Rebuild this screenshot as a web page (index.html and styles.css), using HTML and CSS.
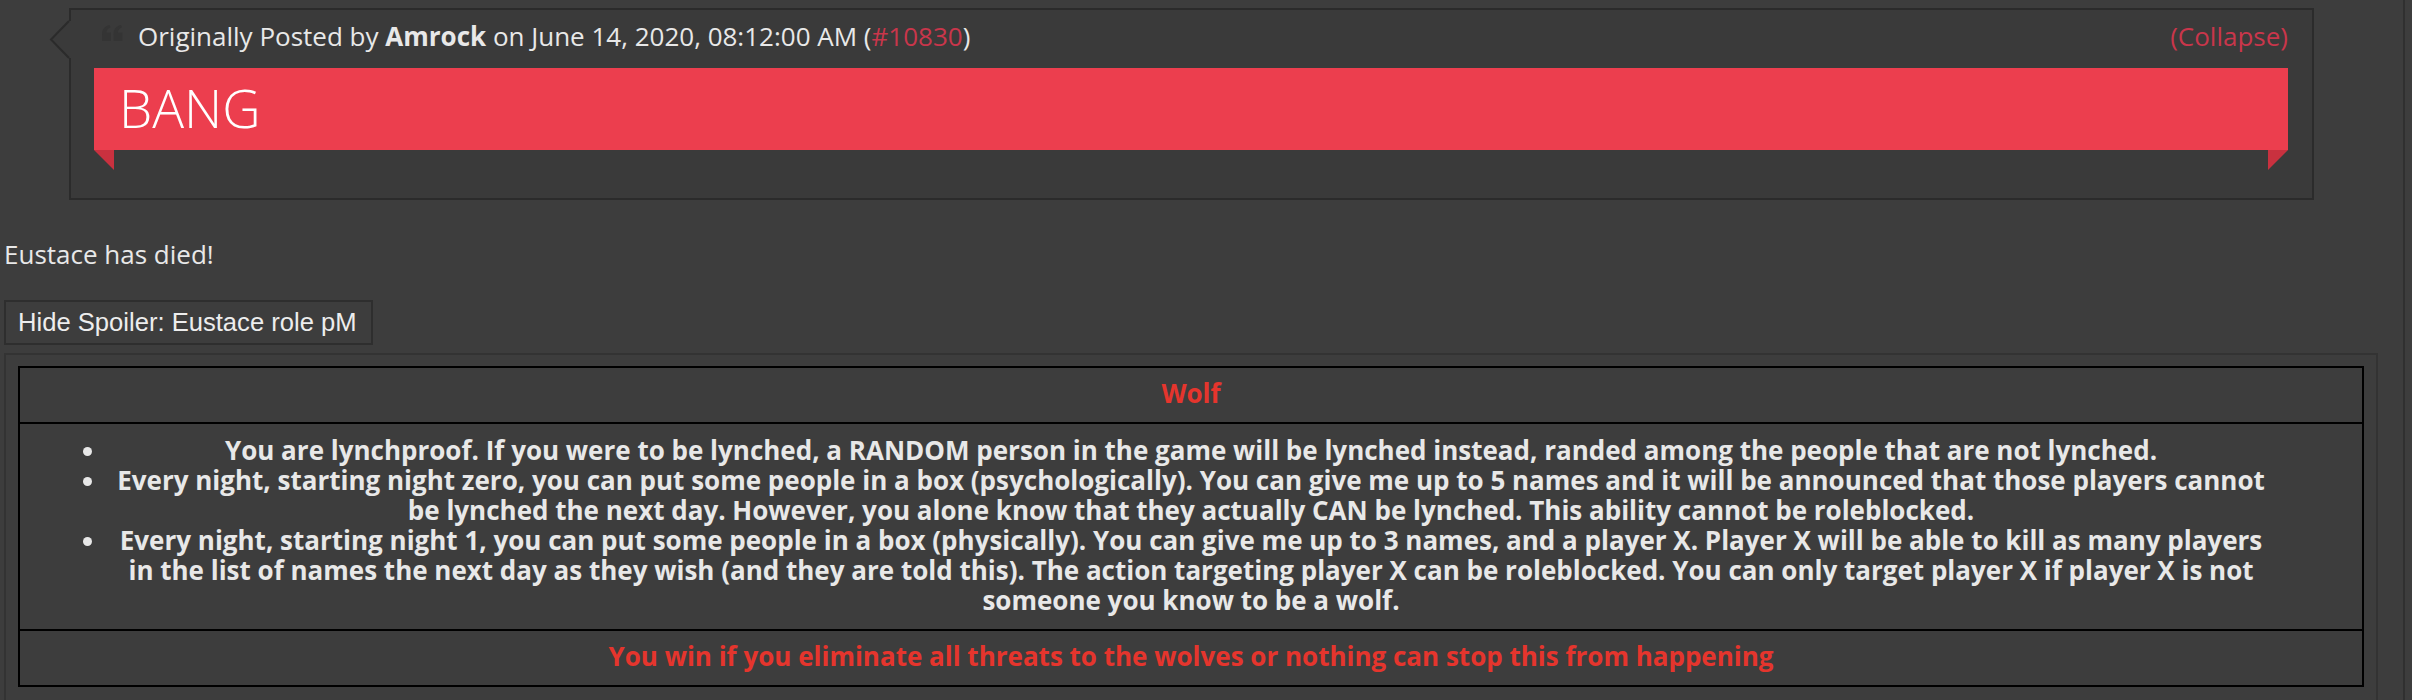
FILE: index.html
```html
<!DOCTYPE html>
<html>
<head>
<meta charset="utf-8">
<link rel="stylesheet" href="styles.css">
</head>
<body>
<div class="page">
  <div class="post">
    <div class="quote">
      <svg class="quote-arrow" width="22" height="39" viewBox="0 0 22 39">
        <polygon points="22,1 20,1 2,19.5 20,38 22,38" fill="#3a3a3a"/>
        <polyline points="20,1 2,19.5 20,38" fill="none" stroke="#2b2b2b" stroke-width="2"/>
      </svg>
      <div class="quote-head">
        <div class="quote-by">
          <svg class="quote-icon" width="21" height="16" viewBox="0 0 21 16">
            <path d="M0 16V9.5C0 4.5 2.5 1.2 7.5 0l1 2.2C6 3.2 4.6 5 4.4 7.5H8.8V16Z" fill="#343434"/>
            <path d="M11.5 16V9.5C11.5 4.5 14 1.2 19 0l1 2.2C17.5 3.2 16.1 5 15.9 7.5H20.3V16Z" fill="#343434"/>
          </svg>
          <span>Originally Posted by <b>Amrock</b> on June 14, 2020, 08:12:00 AM (<a class="red-link">#10830</a>)</span>
        </div>
        <a class="red-link">(Collapse)</a>
      </div>
      <div class="banner">
        BANG
        <span class="fold fold-left"></span>
        <span class="fold fold-right"></span>
      </div>
    </div>

    <p class="died">Eustace has died!</p>

    <button class="spoiler-btn">Hide Spoiler: Eustace role pM</button>

    <div class="spoiler">
      <table class="role">
        <tr><td class="red">Wolf</td></tr>
        <tr><td>
          <ul>
            <li>You are lynchproof. If you were to be lynched, a RANDOM person in the game will be lynched instead, randed among the people that are not lynched.</li>
            <li>Every night, starting night zero, you can put some people in a box (psychologically). You can give me up to 5 names and it will be announced that those players cannot be lynched the next day. However, you alone know that they actually CAN be lynched. This ability cannot be roleblocked.</li>
            <li>Every night, starting night 1, you can put some people in a box (physically). You can give me up to 3 names, and a player X. Player X will be able to kill as many players in the list of names the next day as they wish (and they are told this). The action targeting player X can be roleblocked. You can only target player X if player X is not someone you know to be a wolf.</li>
          </ul>
        </td></tr>
        <tr><td class="red">You win if you eliminate all threats to the wolves or nothing can stop this from happening</td></tr>
      </table>
    </div>
  </div>
</div>
</body>
</html>
```

FILE: styles.css
```css
html, body {
  margin: 0;
  padding: 0;
  background: #3d3d3d;
}

body {
  font-family: "Open Sans", "DejaVu Sans", sans-serif;
  font-size: 26px;
  color: #e8e8e8;
}

.page {
  width: 2403px;
  min-height: 700px;
  border-right: 2px solid #303030;
}

.post {
  width: 2374px;
  padding: 8px 0 0 4px;
}

.quote {
  position: relative;
  margin: 0 64px 0 65px;
  background: #3a3a3a;
  border: 2px solid #2b2b2b;
  padding: 8px 24px 28px 23px;
}

.quote-arrow {
  position: absolute;
  left: -22px;
  top: 10px;
}

.quote-head {
  display: flex;
  justify-content: space-between;
  align-items: center;
  line-height: 36px;
  height: 36px;
  margin-bottom: 14px;
}

.quote-by {
  display: flex;
  align-items: center;
  gap: 15px;
  padding-left: 8px;
}

.quote-icon {
  display: block;
  margin-top: -6px;
}

.quote-head b {
  font-weight: 700;
}

.red-link {
  color: #c9364b;
  text-decoration: none;
}

.banner {
  position: relative;
  height: 82px;
  background: #ec3e4e;
  color: #ffffff;
  font-weight: 300;
  font-size: 53px;
  line-height: 79px;
  padding-left: 25px;
  margin-bottom: 20px;
}

.fold {
  position: absolute;
  top: 82px;
  width: 0;
  height: 0;
  border-style: solid;
}

.fold-left {
  left: 0;
  border-width: 0 20px 20px 0;
  border-color: transparent #c9313f transparent transparent;
}

.fold-right {
  right: 0;
  border-width: 20px 20px 0 0;
  border-color: #c9313f transparent transparent transparent;
}

.died {
  margin: 36px 0 28px 0;
  line-height: 36px;
}

.spoiler-btn {
  display: block;
  height: 45px;
  padding: 0 14px 0 12px;
  background: #3d3d3d;
  border: 2px solid #2e2e2e;
  color: #ededed;
  font-family: "Liberation Sans", Arial, sans-serif;
  font-size: 25.6px;
  margin: 0;
}

.spoiler {
  margin-top: 8px;
  border: 2px solid #333333;
  border-bottom: none;
  padding: 11px 12px 20px 12px;
}

.role {
  width: 100%;
  border-collapse: collapse;
  border: 2px solid #000;
  font-weight: 700;
  line-height: 30px;
  text-align: center;
  color: #e8e8e8;
}

.role td {
  border: 2px solid #000;
  padding: 10px 0 14px 0;
}

.role td.red {
  color: #e5352d;
}

.role ul {
  margin: 0;
  padding: 1px 88px 0 88px;
}
```
